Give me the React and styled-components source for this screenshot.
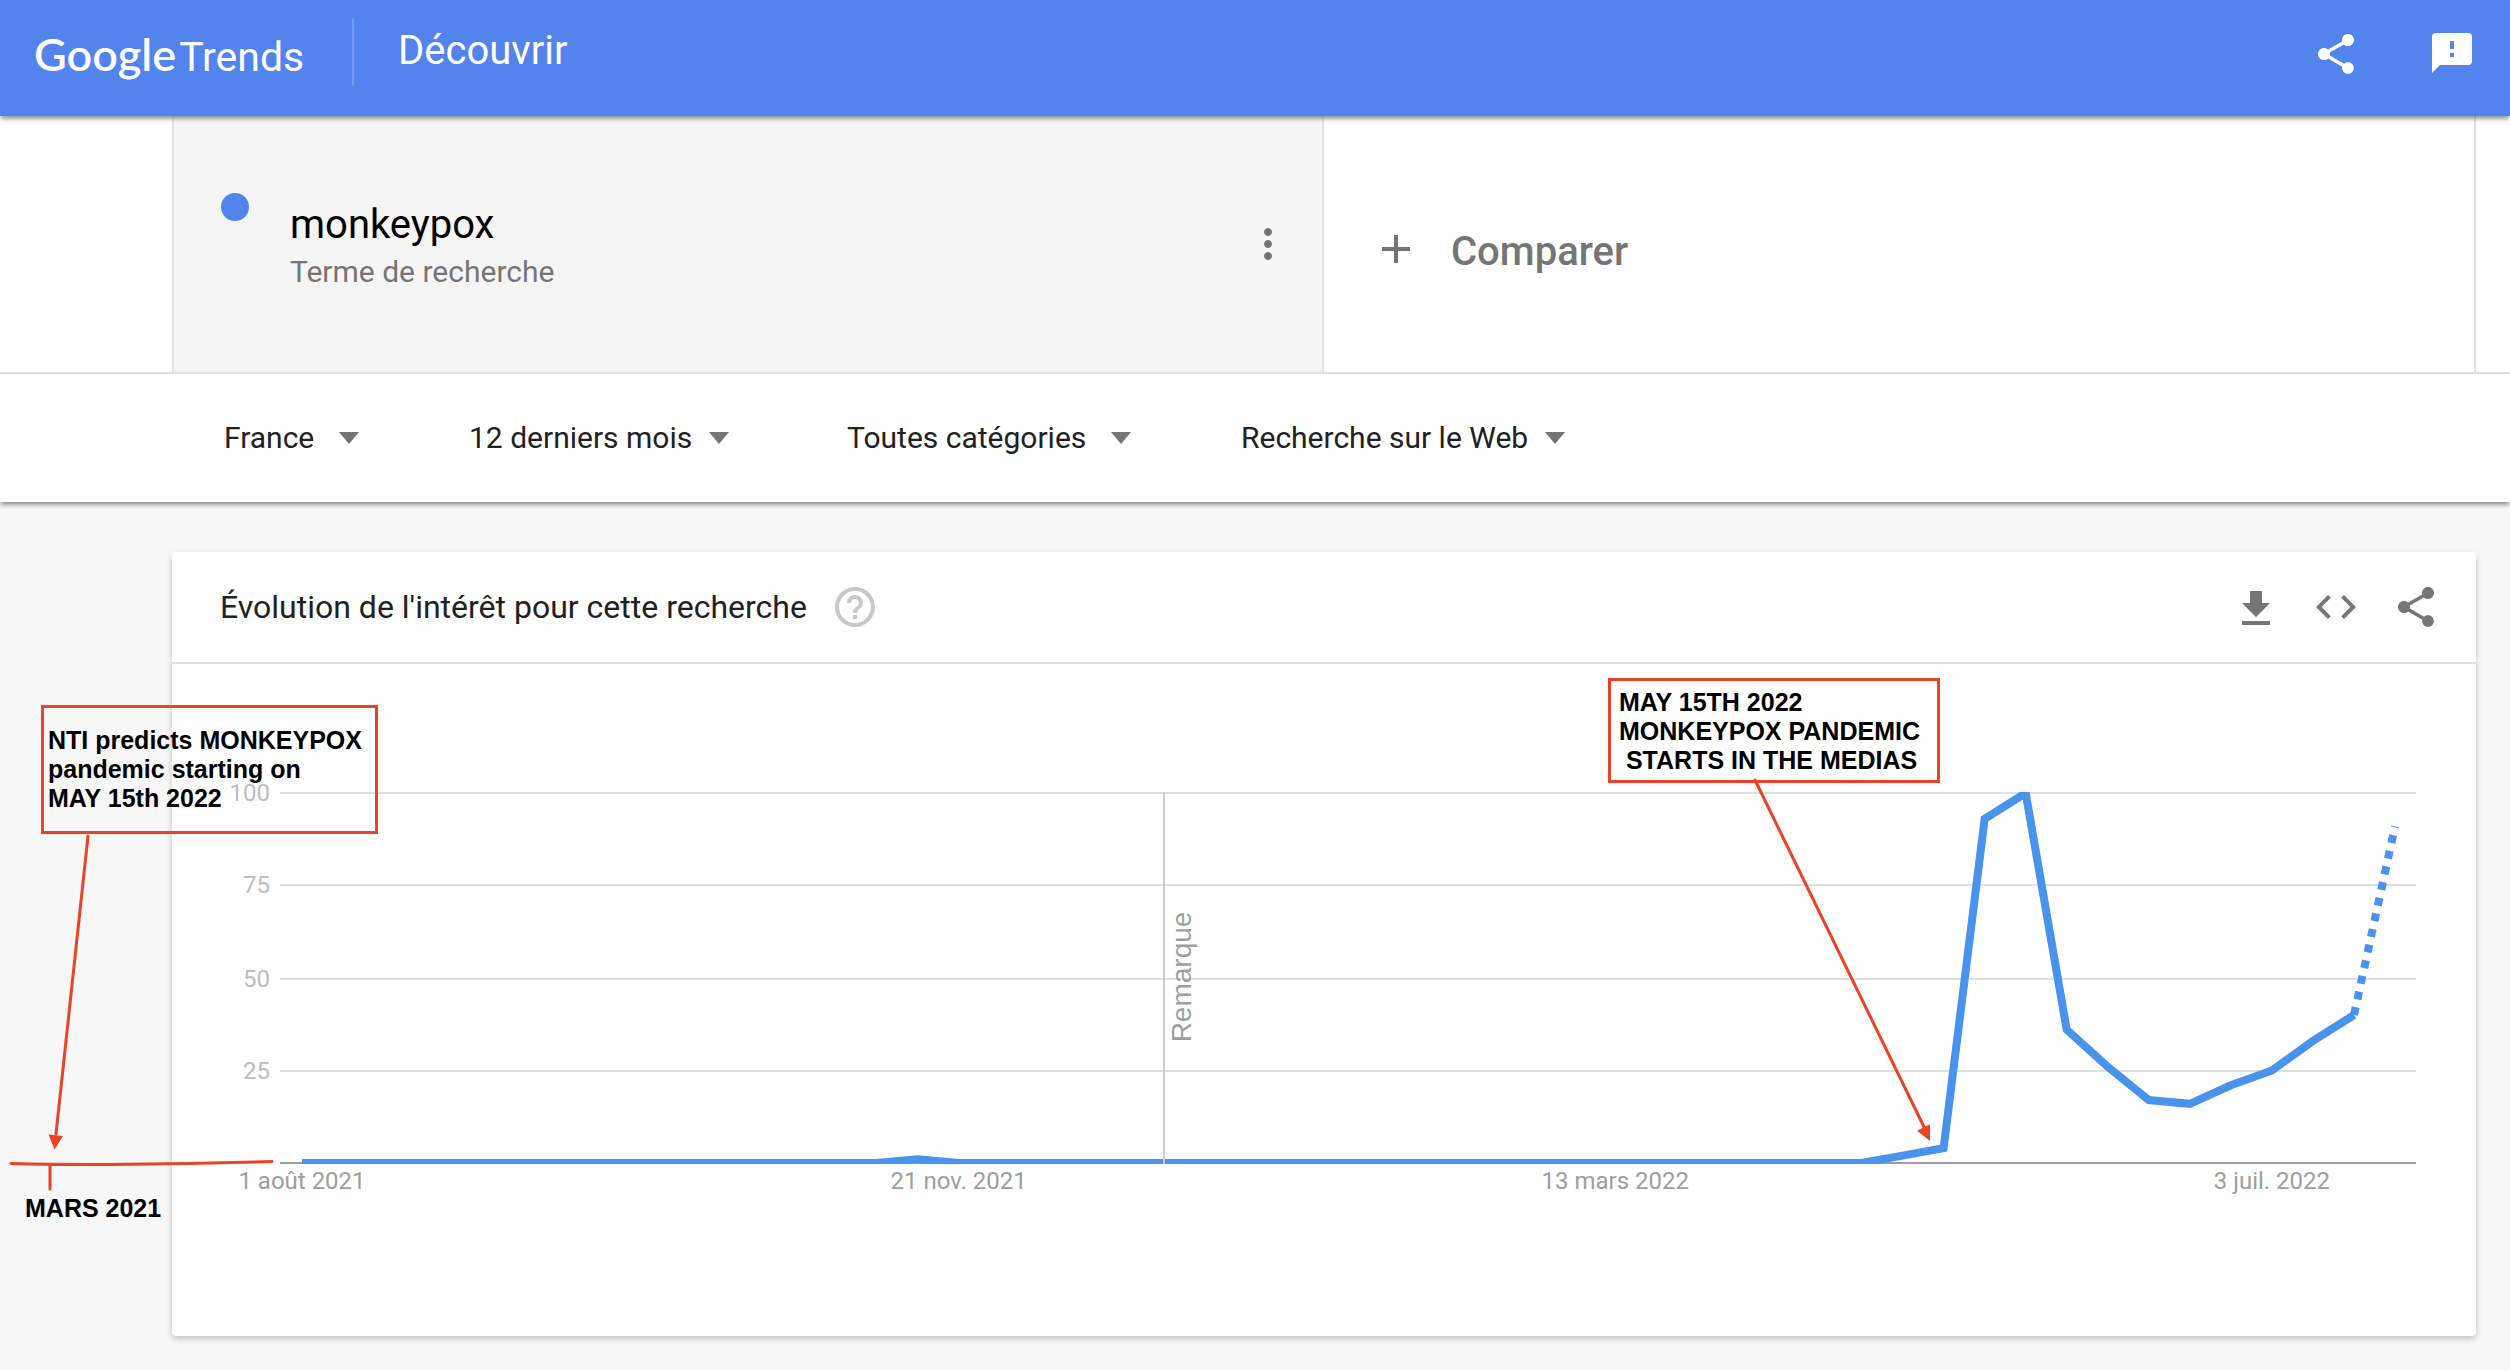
import React from "react";
import styled, { createGlobalStyle, css } from "styled-components";

const color = {
  brand: "#5383ec",
  series: "#4a93ec",
  ink: "#212121",
  muted: "#757575",
  line: "#e0e0e0",
  axis: "#9e9e9e",
  tick: "#bdbdbd",
  note: "#ec4226",
};

const GlobalStyle = createGlobalStyle`
  *, *::before, *::after { box-sizing: border-box; }
  body {
    margin: 0;
    background: #f7f7f7;
    color: ${color.ink};
    font-family: Roboto, "Liberation Sans", sans-serif;
    overflow-x: hidden;
  }
  button, select { font: inherit; color: inherit; }
`;

const raised = css`
  box-shadow: 0 4px 4px -1px rgba(0, 0, 0, 0.4);
`;

const Header = styled.header`
  ${raised}
  position: relative;
  z-index: 2;
  display: flex;
  align-items: flex-start;
  height: 116px;
  padding: 0 34px;
  background: ${color.brand};
  color: #fff;
`;

const Logo = styled.a`
  display: flex;
  align-items: baseline;
  gap: 3px;
  width: 318px;
  padding-top: 24px;
  color: inherit;
  text-decoration: none;
  line-height: 60px;
`;

const LogoGoogle = styled.span`
  font-family: Lato, "Liberation Sans", sans-serif;
  font-size: 45px;
  font-weight: 600;
`;

const LogoTrends = styled.span`
  font-size: 41px;
`;

const Section = styled.a`
  height: 66px;
  margin-top: 19px;
  padding-left: 44px;
  border-left: 2px solid rgba(255, 255, 255, 0.2);
  color: inherit;
  font-size: 40px;
  line-height: 64px;
  text-decoration: none;
`;

const HeaderActions = styled.div`
  display: flex;
  gap: 68px;
  margin-left: auto;
  padding-top: 30px;
`;

const IconButton = styled.button`
  display: flex;
  flex: none;
  padding: 0;
  border: 0;
  background: none;
  color: ${(p) => p.$color || color.muted};
  cursor: pointer;
`;

const Svg = styled.svg`
  display: block;
  width: 48px;
  height: 48px;
  fill: currentColor;
`;

const Terms = styled.section`
  padding: 0 34px 0 172px;
  border-bottom: 2px solid ${color.line};
  background: #fff;
`;

const TermGrid = styled.div`
  display: grid;
  grid-template-columns: 1fr 1fr;
  height: 256px;
`;

const Term = styled.div`
  display: flex;
  align-items: flex-start;
  padding: 77px 30px 0 47px;
  border: solid ${color.line};
  border-width: 0 2px;
  background: #f5f5f5;
`;

const Dot = styled.span`
  width: 28px;
  height: 28px;
  margin-right: 41px;
  border-radius: 50%;
  background: ${color.brand};
`;

const TermText = styled.div`
  flex: 1;
  padding-top: 7px;
`;

const TermName = styled.h1`
  margin: 0;
  color: #000;
  font-size: 40px;
  font-weight: 400;
  line-height: 50px;
`;

const TermKind = styled.p`
  margin: 0;
  color: ${color.muted};
  font-size: 30px;
  line-height: 43px;
`;

const MenuSlot = styled.div`
  padding-top: 27px;
`;

const Compare = styled.button`
  display: flex;
  align-items: center;
  gap: 31px;
  padding: 10px 46px 0 48px;
  border: 0;
  border-right: 2px solid ${color.line};
  background: none;
  color: ${color.muted};
  font-size: 40px;
  font-weight: 500;
  cursor: pointer;
`;

const CompareLabel = styled.span`
  padding-top: 4px;
`;

const Filters = styled.form`
  ${raised}
  position: relative;
  z-index: 1;
  display: flex;
  align-items: center;
  height: 128px;
  padding: 0 34px 0 224px;
  background: #fff;
`;

const Field = styled.label`
  position: relative;
  display: flex;
  align-items: center;
  margin-right: ${(p) => (p.$roomy ? 110 : 118)}px;
`;

const Select = styled.select`
  appearance: none;
  padding: 0 ${(p) => (p.$roomy ? 44 : 36)}px 0 0;
  border: 0;
  background: none;
  font-size: 30px;
  line-height: 40px;
  cursor: pointer;
`;

const Caret = styled.span`
  position: absolute;
  right: 0;
  border: solid transparent;
  border-width: 12px 10px 0;
  border-top-color: ${color.muted};
  pointer-events: none;
`;

const Main = styled.main`
  padding: 50px 34px 34px 172px;
`;

const Card = styled.section`
  border-radius: 4px;
  background: #fff;
  box-shadow: 0 3px 6px rgba(0, 0, 0, 0.2);
`;

const CardHeader = styled.div`
  display: flex;
  align-items: center;
  height: 112px;
  padding: 0 36px 0 48px;
  border-bottom: 2px solid ${color.line};
`;

const CardTitle = styled.h2`
  margin: 0 24px 0 0;
  font-size: 32px;
  font-weight: 400;
  line-height: 40px;
`;

const CardActions = styled.div`
  display: flex;
  gap: 32px;
  margin-left: auto;
`;

const ChartArea = styled.div`
  position: relative;
`;

const Chart = styled.svg`
  display: block;
  width: 100%;
  height: auto;
  overflow: visible;
`;

const TickText = styled.text`
  fill: ${(p) => p.$fill};
  font-family: Roboto, sans-serif;
  font-size: 24px;
`;

const RemarkText = styled.text`
  fill: ${color.axis};
  font-family: "Liberation Sans", sans-serif;
  font-size: 28px;
`;

const Note = styled.p`
  position: absolute;
  left: ${(p) => p.$x}px;
  top: ${(p) => p.$y}px;
  width: ${(p) => p.$w}px;
  margin: 0;
  padding: ${(p) => p.$pad};
  border: ${(p) => (p.$framed ? `3px solid ${color.note}` : 0)};
  color: #000;
  font-family: "Liberation Sans", sans-serif;
  font-size: 25px;
  font-weight: 700;
  line-height: 29px;
  white-space: pre;
`;

const icons = {
  share:
    "M18 16.08c-.76 0-1.44.3-1.96.77L8.91 12.7c.05-.23.09-.46.09-.7s-.04-.47-.09-.7l7.05-4.11c.54.5 1.25.81 2.04.81 1.66 0 3-1.34 3-3s-1.34-3-3-3-3 1.34-3 3c0 .24.04.47.09.7L8.04 9.81C7.5 9.31 6.79 9 6 9c-1.66 0-3 1.34-3 3s1.34 3 3 3c.79 0 1.5-.31 2.04-.81l7.12 4.16c-.05.21-.08.43-.08.65 0 1.61 1.31 2.92 2.92 2.92s2.92-1.31 2.92-2.92-1.31-2.92-2.92-2.92z",
  more: "M12 8c1.1 0 2-.9 2-2s-.9-2-2-2-2 .9-2 2 .9 2 2 2zm0 2c-1.1 0-2 .9-2 2s.9 2 2 2 2-.9 2-2-.9-2-2-2zm0 6c-1.1 0-2 .9-2 2s.9 2 2 2 2-.9 2-2-.9-2-2-2z",
  add: "M19 13h-6v6h-2v-6H5v-2h6V5h2v6h6v2z",
  help: "M11 18h2v-2h-2v2zm1-16C6.48 2 2 6.48 2 12s4.48 10 10 10 10-4.48 10-10S17.52 2 12 2zm0 18c-4.41 0-8-3.59-8-8s3.59-8 8-8 8 3.59 8 8-3.59 8-8 8zm0-14c-2.21 0-4 1.79-4 4h2c0-1.1.9-2 2-2s2 .9 2 2c0 2-3 1.75-3 5h2c0-2.25 3-2.5 3-5 0-2.21-1.79-4-4-4z",
  download: "M19 10h-4V4H9v6H5l7 7 7-7zM5 19v2h14v-2H5z",
  code: "M9.4 16.6L4.8 12l4.6-4.6L8 6l-6 6 6 6 1.4-1.4zm5.2 0l4.6-4.6-4.6-4.6L16 6l6 6-6 6-1.4-1.4z",
};

const Icon = ({ name }) => (
  <Svg viewBox="0 0 24 24" aria-hidden="true">
    <path d={icons[name]} />
  </Svg>
);

/* Speech bubble with a cut-out exclamation mark. */
const FeedbackIcon = () => (
  <Svg viewBox="0 0 48 48" aria-hidden="true">
    <path
      fillRule="evenodd"
      d="M8 3h32a4 4 0 0 1 4 4v24a4 4 0 0 1-4 4H12l-8 8V7a4 4 0 0 1 4-4zM22 11v8h4v-8zM22 23v4h4v-4z"
    />
  </Svg>
);

const filters = [
  { label: "Région", value: "France", roomy: true },
  { label: "Période", value: "12 derniers mois" },
  { label: "Catégorie", value: "Toutes catégories", roomy: true },
  { label: "Type de recherche", value: "Recherche sur le Web" },
];

const weeks = Array(52).fill(0);
weeks[15] = 1;
[2, 4, 93, 100, 36, 26, 17, 16, 21, 25, 33, 40, 91].forEach((v, i) => {
  weeks[39 + i] = v;
});

const plot = { left: 108, right: 2244, top: 128, bottom: 500 };
const xAt = (week) => 130 + week * 41.04;
const yAt = (value) => 499 - value * 3.7;
const points = (from, to) =>
  weeks
    .slice(from, to)
    .map((v, i) => `${xAt(from + i)},${yAt(v)}`)
    .join(" ");

const gridRows = [
  { value: 100, y: 129 },
  { value: 75, y: 221 },
  { value: 50, y: 315 },
  { value: 25, y: 407 },
];

const dates = [
  { week: 0, text: "1 août 2021" },
  { week: 16, text: "21 nov. 2021" },
  { week: 32, text: "13 mars 2022" },
  { week: 48, text: "3 juil. 2022" },
];

function InterestChart() {
  return (
    <Chart viewBox="0 0 2304 672" role="img" aria-label="Évolution de l'intérêt">
      <clipPath id="plot">
        <rect x={plot.left} y={plot.top} width={plot.right - plot.left} height={plot.bottom - plot.top} />
      </clipPath>
      {gridRows.map((row) => (
        <g key={row.value}>
          <line x1={plot.left} x2={plot.right} y1={row.y} y2={row.y} stroke={color.line} strokeWidth="2" />
          <TickText $fill={color.tick} x="98" y={row.y + 8} textAnchor="end">
            {row.value}
          </TickText>
        </g>
      ))}
      <line x1={plot.left} x2={plot.right} y1="499" y2="499" stroke={color.axis} strokeWidth="2" />
      <g clipPath="url(#plot)" fill="none" stroke={color.series} strokeWidth="8">
        <polyline points={points(0, 51)} />
        <polyline points={points(50, 52)} strokeDasharray="8 8" />
      </g>
      <line x1="992" x2="992" y1={plot.top} y2={plot.bottom} stroke="#cccccc" strokeWidth="2" />
      <RemarkText transform="translate(1019 313) rotate(-90)" textAnchor="middle">
        Remarque
      </RemarkText>
      {dates.map((d) => (
        <TickText key={d.text} $fill={color.axis} x={xAt(d.week)} y="525" textAnchor="middle">
          {d.text}
        </TickText>
      ))}
      <g stroke={color.note} strokeWidth="3" strokeLinecap="round" fill="none">
        <path d="M-84 172L-116 470M-161 499.500Q-60 502 100 497.500M-122 501V525M1583 116L1753 465" />
        <path d="M-123.500 470.500L-109 472L-117.500 485.500Z M1745 466.700L1758 460.300V477Z" fill={color.note} stroke="none" />
      </g>
    </Chart>
  );
}

export default function App() {
  return (
    <>
      <GlobalStyle />
      <Header>
        <Logo href="#" aria-label="Google Trends">
          <LogoGoogle>Google</LogoGoogle>
          <LogoTrends>Trends</LogoTrends>
        </Logo>
        <Section href="#">Découvrir</Section>
        <HeaderActions>
          <IconButton type="button" aria-label="Partager" $color="#fff">
            <Icon name="share" />
          </IconButton>
          <IconButton type="button" aria-label="Commentaires" $color="#fff">
            <FeedbackIcon />
          </IconButton>
        </HeaderActions>
      </Header>

      <Terms>
        <TermGrid>
          <Term>
            <Dot />
            <TermText>
              <TermName>monkeypox</TermName>
              <TermKind>Terme de recherche</TermKind>
            </TermText>
            <MenuSlot>
              <IconButton type="button" aria-label="Options">
                <Icon name="more" />
              </IconButton>
            </MenuSlot>
          </Term>
          <Compare type="button">
            <Icon name="add" />
            <CompareLabel>Comparer</CompareLabel>
          </Compare>
        </TermGrid>
      </Terms>

      <Filters>
        {filters.map((f) => (
          <Field key={f.label} $roomy={f.roomy}>
            <Select $roomy={f.roomy} aria-label={f.label}>
              <option>{f.value}</option>
            </Select>
            <Caret />
          </Field>
        ))}
      </Filters>

      <Main>
        <Card>
          <CardHeader>
            <CardTitle>Évolution de l'intérêt pour cette recherche</CardTitle>
            <IconButton type="button" aria-label="Aide" $color="#c8c8c8">
              <Icon name="help" />
            </IconButton>
            <CardActions>
              <IconButton type="button" aria-label="Télécharger">
                <Icon name="download" />
              </IconButton>
              <IconButton type="button" aria-label="Intégrer">
                <Icon name="code" />
              </IconButton>
              <IconButton type="button" aria-label="Partager le graphique">
                <Icon name="share" />
              </IconButton>
            </CardActions>
          </CardHeader>
          <ChartArea>
            <InterestChart />
            <Note $framed $x={-131} $y={41} $w={337} $pad="18px 4px">
              {"NTI predicts MONKEYPOX\npandemic starting on\nMAY 15th 2022"}
            </Note>
            <Note $framed $x={1436} $y={14} $w={332} $pad="7px 8px 5px">
              {"MAY 15TH 2022\nMONKEYPOX PANDEMIC\n STARTS IN THE MEDIAS"}
            </Note>
            <Note $x={-147} $y={530} $w={140} $pad="0">
              MARS 2021
            </Note>
          </ChartArea>
        </Card>
      </Main>
    </>
  );
}
